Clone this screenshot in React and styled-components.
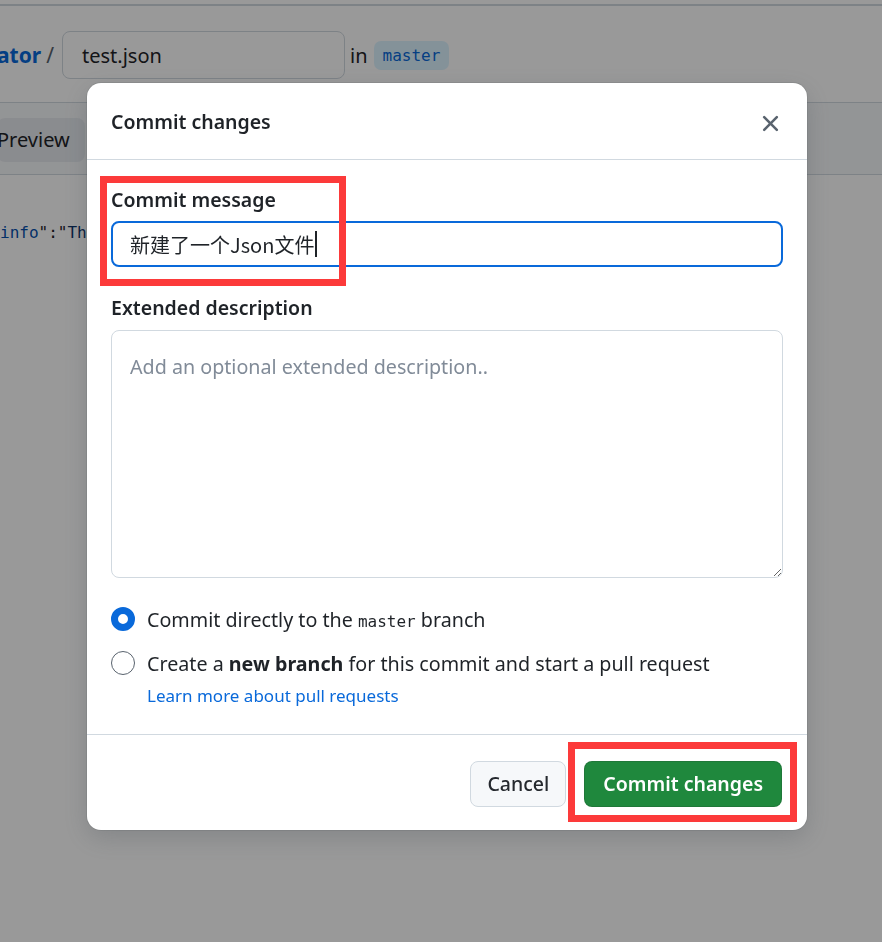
import React from 'react';
import styled, { createGlobalStyle } from 'styled-components';

const GlobalStyle = createGlobalStyle`
    html, body {
        margin: 0;
        padding: 0;
        background: #ffffff;
        font-family: "Noto Sans", "Noto Sans CJK SC", sans-serif;
        color: #1f2328;
        overflow: hidden;
    }
    * { box-sizing: border-box; }
`;

const Page = styled.div`
    width: 882px;
    height: 942px;
    position: relative;
    overflow: hidden;
    border-top: 2px solid #d1d9e0;
    margin-top: 4px;
`;

const Breadcrumb = styled.div`
    display: flex;
    align-items: center;
    height: 97px;
    padding-top: 2px;
    border-bottom: 1px solid #d1d9e0;
    font-size: 20px;
`;

const RepoName = styled.span`
    color: #0969da;
    font-weight: 700;
    font-size: 21px;
    margin-left: -3px;
`;

const Slash = styled.span`
    color: #59636e;
    margin: 0 8px 0 5px;
    font-size: 21px;
`;

const FileInput = styled.div`
    width: 283px;
    height: 48px;
    border: 1px solid #d1d9e0;
    border-radius: 8px;
    padding-left: 19px;
    display: flex;
    align-items: center;
    font-size: 20px;
`;

const InText = styled.span`
    margin: 0 6px 0 5px;
`;

const BranchBadge = styled.span`
    background: #ddf4ff;
    color: #0969da;
    border-radius: 7px;
    padding: 5px 9px;
    font-family: "DejaVu Sans Mono", monospace;
    font-size: 16px;
`;

const TabBar = styled.div`
    height: 72px;
    background: #f6f8fa;
    border-bottom: 1px solid #d1d9e0;
    display: flex;
    align-items: center;
    padding-top: 2px;
`;

const Tab = styled.div`
    height: 44px;
    width: 88px;
    margin-left: -3px;
    border-radius: 8px;
    background: #e6eaef;
    display: flex;
    align-items: center;
    font-size: 20px;
`;

const CodeLine = styled.div`
    padding-top: 48px;
    font-family: "DejaVu Sans Mono", monospace;
    font-size: 16px;
    white-space: pre;
    color: #1f2328;
`;

const Key = styled.span`
    color: #0550ae;
`;

const Str = styled.span`
    color: #0a3069;
`;

const Overlay = styled.div`
    position: fixed;
    inset: 0;
    background: rgba(0, 0, 0, 0.4);
    padding: 83px 0 0 87px;
`;

const Dialog = styled.div`
    position: relative;
    width: 720px;
    background: #ffffff;
    border-radius: 14px;
    box-shadow: 0 8px 24px rgba(66, 74, 83, 0.25), 0 0 0 1px rgba(31, 35, 40, 0.08);
`;

const DialogHeader = styled.div`
    height: 77px;
    padding: 0 24px;
    display: flex;
    align-items: center;
    justify-content: space-between;
    border-bottom: 1px solid #d1d9e0;
`;

const Title = styled.h2`
    margin: 0;
    font-size: 19.5px;
    font-weight: 600;
`;

const CloseButton = styled.button`
    border: none;
    background: none;
    padding: 0;
    width: 30px;
    height: 30px;
    margin-right: -2px;
    margin-top: 4px;
    display: flex;
    align-items: center;
    justify-content: center;
    color: #59636e;
`;

const Body = styled.div`
    padding: 26px 24px 27px;
    display: flex;
    flex-direction: column;
`;

const Label = styled.label`
    font-size: 19.5px;
    font-weight: 600;
    line-height: 28px;
    margin-top: ${p => p.$top || 0}px;
`;

const MessageField = styled.div`
    margin-top: 7px;
    height: 46px;
    border: 2px solid #0969da;
    border-radius: 8px;
    padding-left: 17px;
    display: flex;
    align-items: center;
    font-family: "Noto Sans CJK SC", "Noto Sans", sans-serif;
    font-size: 20px;
    color: #1f2328;
`;

const Caret = styled.span`
    display: inline-block;
    width: 2px;
    height: 26px;
    background: #1f2328;
    margin-left: 1px;
`;

const Description = styled.textarea`
    margin-top: 8px;
    height: 248px;
    border: 1px solid #d1d9e0;
    border-radius: 8px;
    padding: 22px 18px;
    font-family: "Noto Sans", sans-serif;
    font-size: 19.7px;
    resize: vertical;
    outline: none;
    &::placeholder {
        color: #818b98;
    }
`;

const Options = styled.div`
    margin-top: 27px;
    display: flex;
    flex-direction: column;
    gap: 16px;
`;

const Option = styled.div`
    display: flex;
    align-items: center;
    gap: 12px;
    height: 28px;
    font-size: 19.7px;
`;

const Radio = styled.span`
    width: 24px;
    height: 24px;
    border-radius: 50%;
    flex-shrink: 0;
    border: ${p => (p.$checked ? '7px solid #0969da' : '1.5px solid #59636e')};
    background: #ffffff;
`;

const Mono = styled.span`
    font-family: "DejaVu Sans Mono", monospace;
    font-size: 16px;
`;

const OptionGroup = styled.div`
    display: flex;
    flex-direction: column;
`;

const HelpLink = styled.a`
    margin: 8px 0 0 36px;
    color: #0969da;
    font-size: 17px;
    line-height: 22px;
    text-decoration: none;
`;

const Footer = styled.div`
    height: 96px;
    border-top: 1px solid #d1d9e0;
    padding: 2px 25px 0;
    display: flex;
    align-items: center;
    justify-content: flex-end;
    gap: 18px;
`;

const Button = styled.button`
    height: 46px;
    padding: 0 ${p => (p.$primary ? 18 : 16)}px;
    border-radius: 8px;
    font-family: "Noto Sans", sans-serif;
    font-size: 19.5px;
    font-weight: ${p => (p.$primary ? 600 : 500)};
    border: 1px solid ${p => (p.$primary ? 'rgba(31, 35, 40, 0.15)' : '#d1d9e0')};
    background: ${p => (p.$primary ? '#1f883d' : '#f6f8fa')};
    color: ${p => (p.$primary ? '#ffffff' : '#25292e')};
`;

const Highlight = styled.div`
    position: absolute;
    border: 7px solid #fc3a3a;
    pointer-events: none;
`;

const XIcon = () => (
    <svg width="27" height="27" viewBox="0 0 16 16" fill="currentColor">
        <path d="M3.72 3.72a.75.75 0 0 1 1.06 0L8 6.94l3.22-3.22a.749.749 0 0 1 1.275.326.749.749 0 0 1-.215.734L9.06 8l3.22 3.22a.749.749 0 0 1-.326 1.275.749.749 0 0 1-.734-.215L8 9.06l-3.22 3.22a.751.751 0 0 1-1.042-.018.751.751 0 0 1-.018-1.042L6.94 8 3.72 4.78a.75.75 0 0 1 0-1.06Z" />
    </svg>
);

const App = () => {
    return (
        <>
            <GlobalStyle />
            <Page>
                <Breadcrumb>
                    <RepoName>ator</RepoName>
                    <Slash>/</Slash>
                    <FileInput>test.json</FileInput>
                    <InText>in</InText>
                    <BranchBadge>master</BranchBadge>
                </Breadcrumb>
                <TabBar>
                    <Tab>Preview</Tab>
                </TabBar>
                <CodeLine>
                    <Key>info</Key>":"<Str>Th</Str>
                </CodeLine>
            </Page>
            <Overlay>
                <Dialog>
                    <DialogHeader>
                        <Title>Commit changes</Title>
                        <CloseButton aria-label="Close">
                            <XIcon />
                        </CloseButton>
                    </DialogHeader>
                    <Body>
                        <Label>Commit message</Label>
                        <MessageField>
                            新建了一个Json文件
                            <Caret />
                        </MessageField>
                        <Label $top={27}>Extended description</Label>
                        <Description placeholder="Add an optional extended description.." />
                        <Options>
                            <Option>
                                <Radio $checked />
                                <span>
                                    Commit directly to the <Mono>master</Mono> branch
                                </span>
                            </Option>
                            <OptionGroup>
                                <Option>
                                    <Radio />
                                    <span>
                                        Create a <b>new branch</b> for this commit and start a pull request
                                    </span>
                                </Option>
                                <HelpLink href="#">Learn more about pull requests</HelpLink>
                            </OptionGroup>
                        </Options>
                    </Body>
                    <Footer>
                        <Button>Cancel</Button>
                        <Button $primary>Commit changes</Button>
                    </Footer>
                    <Highlight style={{ left: 13, top: 93, width: 246, height: 110 }} />
                    <Highlight style={{ left: 481, top: 659, width: 229, height: 80 }} />
                </Dialog>
            </Overlay>
        </>
    );
};

export default App;
